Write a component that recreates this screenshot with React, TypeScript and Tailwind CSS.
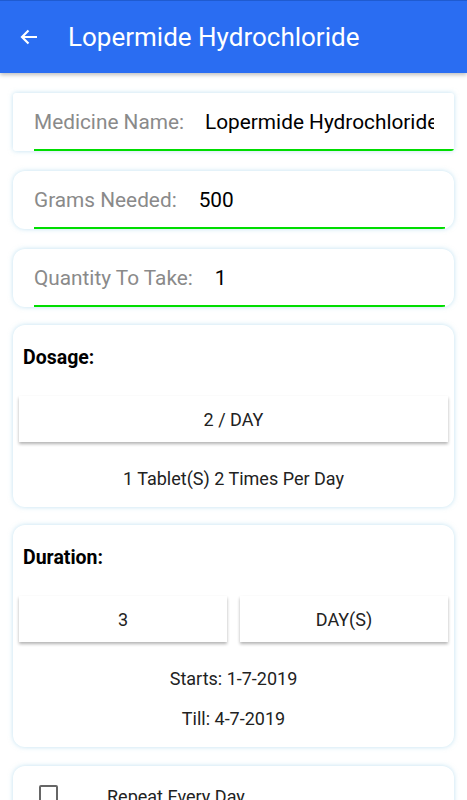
import React from "react"

const font = { fontFamily: "Roboto, 'Noto Sans', sans-serif" }

function FieldCard({ label, value, gap, square }: { label: string; value: string; gap: string; square?: boolean }) {
  return (
    <div
      className={`mx-[13px] h-[58px] bg-white shadow-[0_0_5px_rgba(140,200,230,0.55)] ${square ? "rounded-[3px]" : "rounded-[12px]"} overflow-hidden`}
    >
      <div className={`ml-[21px] h-full flex items-center pt-[3px] border-b-2 border-[#00dd00] ${square ? "mr-0" : "mr-[9px]"}`}>
        <span className="text-[20.8px] text-[#8a8a8a] whitespace-nowrap">{label}</span>
        <span className={`text-[20.8px] text-black whitespace-nowrap overflow-hidden ${gap}`}>{value}</span>
      </div>
    </div>
  )
}

function Btn({ children }: { children: React.ReactNode }) {
  return (
    <div className="flex-1 h-[46px] bg-white flex items-center justify-center text-[18px] text-[#222] shadow-[0_2px_3px_rgba(0,0,0,0.3)]">
      {children}
    </div>
  )
}

export default function App() {
  return (
    <div className="w-[467px] h-[800px] bg-white overflow-hidden" style={font}>
      {/* Header */}
      <div className="h-[73px] bg-[#2a6df2] border-t border-[#1f5bd0] flex items-center shadow-[0_2px_4px_rgba(0,0,0,0.25)] relative">
        <svg className="ml-[20px]" width="18" height="16" viewBox="0 0 18 16" fill="none">
          <path d="M17 8H2M8.5 1.5L2 8l6.5 6.5" stroke="white" strokeWidth="2.2" />
        </svg>
        <h1 className="ml-[30px] text-[26px] text-white">Lopermide Hydrochloride</h1>
      </div>

      <div className="flex flex-col gap-[20px] pt-[20px]">
        <FieldCard label="Medicine Name:" value="Lopermide Hydrochloride" gap="ml-[21px] max-w-[229px]" square />
        <FieldCard label="Grams Needed:" value="500" gap="ml-[22px]" />
        <FieldCard label="Quantity To Take:" value="1" gap="ml-[22px]" />

        {/* Dosage */}
        <div className="mx-[13px] -mt-[2px] h-[182px] bg-white rounded-[12px] shadow-[0_0_5px_rgba(140,200,230,0.55)] px-[6px] pt-[18px]">
          <div className="ml-[4px] text-[19.5px] font-bold text-black">Dosage:</div>
          <div className="flex mt-[24px]">
            <Btn>2 / DAY</Btn>
          </div>
          <div className="text-center text-[18px] text-[#222] mt-[23px]">1 Tablet(S) 2 Times Per Day</div>
        </div>

        {/* Duration */}
        <div className="mx-[13px] -mt-[2px] h-[222px] bg-white rounded-[12px] shadow-[0_0_5px_rgba(140,200,230,0.55)] px-[6px] pt-[18px]">
          <div className="ml-[4px] text-[19.5px] font-bold text-black">Duration:</div>
          <div className="flex gap-[13px] mt-[24px]">
            <Btn>3</Btn>
            <Btn>DAY(S)</Btn>
          </div>
          <div className="text-center text-[18px] text-[#222] mt-[23px]">Starts: 1-7-2019</div>
          <div className="text-center text-[18px] text-[#222] mt-[13px]">Till: 4-7-2019</div>
        </div>

        {/* Repeat */}
        <div className="mx-[13px] -mt-[1px] h-[80px] bg-white rounded-[12px] shadow-[0_0_5px_rgba(140,200,230,0.55)] flex items-start pt-[19px]">
          <div className="ml-[26px] w-[19px] h-[19px] border-2 border-[#666] rounded-[2px]" />
          <span className="ml-[49px] text-[18px] text-[#222] -mt-[2px]">Repeat Every Day</span>
        </div>
      </div>
    </div>
  )
}
